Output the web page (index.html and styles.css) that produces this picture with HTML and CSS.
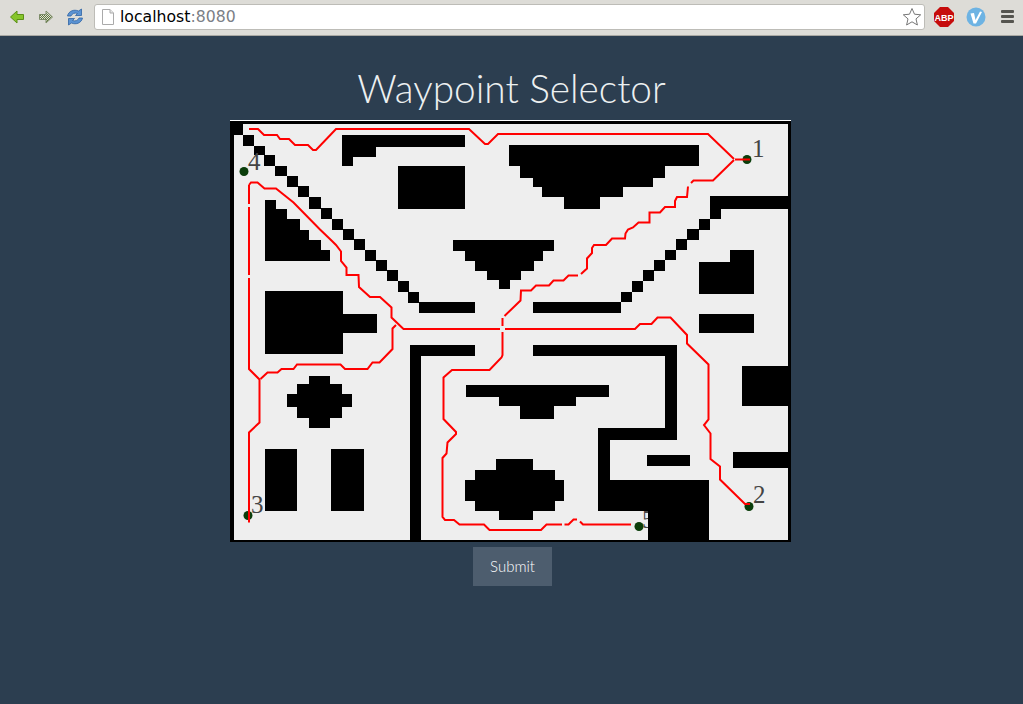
FILE: index.html
```html
<!DOCTYPE HTML>
<html>
	<head>
		<title>Waypoint Selector</title>
		<link rel="stylesheet" href="styles.css">
	</head>
	<body>
		<!-- browser toolbar -->
		<div class="toolbar">
			<svg class="navIcon" width="18" height="18" viewBox="0 0 18 18">
				<path d="M2.500 9 9 3V6.500H15.500V11.500H9V15z" fill="#86c52b" stroke="#5b8f17"/>
			</svg>
			<svg class="navIcon" width="18" height="18" viewBox="0 0 18 18">
				<defs>
					<pattern id="dither" width="2" height="2" patternUnits="userSpaceOnUse">
						<rect width="2" height="2" fill="#dddcd7"/>
						<rect width="1" height="1" fill="#5f7a3a"/>
						<rect x="1" y="1" width="1" height="1" fill="#5f7a3a"/>
					</pattern>
				</defs>
				<path d="M15.500 9 9 3V6.500H2.500V11.500H9V15z" fill="url(#dither)" stroke="#7d8c68"/>
			</svg>
			<svg class="navIcon" width="18" height="18" viewBox="0 0 18 18">
				<path d="M1.500 8C2.500 3 8 1 12.500 3L15.500 1V7.500H9.500L11.500 5.500C8.500 4.500 6 5.500 5 8z" fill="#5b93d3" stroke="#2f63a3" stroke-width=".8"/>
				<path d="M16.500 10C15.500 15 10 17 5.500 15L2.500 17V10.500H8.500L6.500 12.500C9.500 13.500 12 12.500 13 10z" fill="#5b93d3" stroke="#2f63a3" stroke-width=".8"/>
			</svg>
			<div class="urlBar">
				<svg width="12" height="16" viewBox="0 0 12 16">
					<path d="M.5.500H8L11.500 4V15.500H.5z" fill="#fff" stroke="#aaa"/>
					<path d="M8 .5V4h3.500" fill="#e8e8e8" stroke="#aaa"/>
				</svg>
				<span class="url">localhost<span class="port">:8080</span></span>
				<svg class="star" width="20" height="19" viewBox="0 0 20 19">
					<path d="M10 1.500 12.500 7.200 18.700 7.800 14 11.900 15.400 18 10 14.800 4.600 18 6 11.900 1.300 7.800 7.500 7.200z" fill="#fff" stroke="#777"/>
				</svg>
			</div>
			<svg class="extIcon" width="20" height="20" viewBox="0 0 20 20">
				<path d="M6 0H14L20 6V14L14 20H6L0 14V6z" fill="#c60c0c"/>
				<text x="10" y="13.500" class="abpText">ABP</text>
			</svg>
			<svg class="extIcon" width="20" height="20" viewBox="0 0 20 20">
				<circle cx="10" cy="10" r="9.500" fill="#6db3e3"/>
				<path d="M4.500 6.500 8 6 9.500 13 14 4.500 16 5 10 16.500H7.500z" fill="#fff"/>
			</svg>
			<div class="menuIcon"><span></span><span></span><span></span></div>
		</div>

		<div class="page">
			<h1>Waypoint Selector</h1>

			<div class="mapFrame">
				<svg class="map" width="554" height="416" viewBox="234 124 554 416">
					<!-- walls -->
					<path class="wall" d="
						M230 121H243V135H230Z M243 135H254V146H243Z M254 146H265V155H254Z M264 155H275V166H264Z
						M275 166H287V176H275Z M287 176H298V187H287Z M298 186H309V197H298Z M309 197H321V209H309Z
						M321 208H332V219H321Z M332 219H343V230H332Z M343 229H354V240H343Z M354 239H365V250H354Z
						M365 250H376V261H365Z M376 260H387V271H376Z M387 270H398V281H387Z M398 281H409V292H398Z
						M408 292H419V303H408Z M419 302H475V313H419Z
						M342 135H465V147H376V157H353V166H342Z
						M398 166H465V209H398Z
						M265 200H276V209H287V219H300V230H309V240H321V250H330V261H265Z
						M265 291H343V314H377V333H343V354H265Z
						M453 240H554V251H543V261H534V271H521V280H510V289H499V280H487V271H475V261H465V251H453Z
						M509 145H699V166H665V178H653V187H623V197H600V209H564V197H542V187H533V178H520V166H509Z
						M710 196H790V209H721V219H710Z M699 219H710V230H699Z M687 229H699V240H687Z M676 239H687V250H676Z
						M665 250H676V260H665Z M654 260H665V271H654Z M643 270H654V281H643Z M632 281H643V292H632Z
						M621 292H632V302H621Z M533 302H621V313H533Z
						M730 250H754V294H699V262H730Z
						M699 314H754V333H699Z
						M533 345H677V440H610V480H709V540H648V511H598V428H665V356H533Z
						M647 455H690V466H647Z
						M742 366H790V406H742Z
						M733 452H790V468H733Z
						M466 385H609V397H576V406H554V419H520V406H499V397H466Z
						M496 459H533V470H555V480H564V501H555V511H533V520H499V511H475V501H465V480H475V470H496Z
						M410 345H475V356H421V540H410Z
						M309 376H330V384H342V394H352V407H342V418H330V428H309V418H297V407H287V394H297V384H309Z
						M265 449H297V511H265Z
						M331 449H364V511H331Z"/>

					<!-- labels -->
					<text class="label" x="752" y="157">1</text>
					<text class="label" x="753" y="503">2</text>
					<text class="label" x="251" y="513">3</text>
					<text class="label" x="248" y="170">4</text>
					<text class="label" x="642" y="528">5</text>
					<rect class="wall" x="648" y="511" width="61" height="29"/>

					<!-- waypoints -->
					<circle class="point" cx="747" cy="159.500" r="4.500"/>
					<circle class="point" cx="749" cy="506.500" r="4.500"/>
					<circle class="point" cx="248" cy="515.500" r="4.500"/>
					<circle class="point" cx="244" cy="171.500" r="4.500"/>
					<circle class="point" cx="639" cy="526.500" r="4.500"/>

					<!-- route -->
					<path class="route" d="M249 129H258L264 135H277L280 139H289L295 145H308L313 150H316L336 129H469L485 144H488L498 134H708L734 159"/>
					<path class="route" d="M735 159.500H750"/>
					<path class="route" d="M734 160 713 180.500H693.500L691 183"/>
					<path class="route" d="M688 186.500 687 197H677L675 201V207H665L660 212.500H649.500V222.500H638.500L633 227.500 628 229.500 625.500 233.500 625 238.500H612L606 245H594L592 248V253L587 258.500V268.500L581 274"/>
					<path class="route" d="M578 275.500H568.500L563.500 280.500H553.500L549 285.500H536L531 290.500H521L520.500 300.500 504.500 316"/>
					<path class="route" d="M502.500 318V326"/>
					<path class="route" d="M502.500 332V355L501.500 357.500 489.500 370H452L443.500 377.500V419L456 432V434L447.500 442.500 446.500 453.500 442.500 458V517L445 520H454L459.500 524.500H484L489.500 530H541L546.500 524.500H562"/>
					<path class="route" d="M564.500 524.500H568.500L573.500 519.500H577"/>
					<path class="route" d="M580 521.500 583 524.500H631"/>
					<path class="route" d="M249 185 251 182.500H257.500L264.500 188.500H276L283.500 194.500 293.500 202.500 320 229.500 332 241 336 245 341 251.500V261L346.500 267.500V275H358.500L359 287 370 297H380L391.500 307.500V317.500L403.500 329H500"/>
					<path class="route" d="M505 329H635L640 324H651.500L657.500 317.500H670.500L687 335V343.500L708.500 364.500V419.500L704 425 710.500 433.500V459L720 466.500V479.500L745 504H750"/>
					<path class="route" d="M396 325 392.500 328.500V349L379.500 362.500H372.500L367.500 369H345L340.500 364.500H297L293.500 369H281.500L277.500 372.500H267.500L260.500 379"/>
					<path class="route" d="M249 185V204"/>
					<path class="route" d="M249 207V275"/>
					<path class="route" d="M249 278V369L259.500 379.500V422.500L249 432.500V522.500"/>
				</svg>
			</div>

			<button class="submitButton">Submit</button>
		</div>
	</body>
</html>
```

FILE: styles.css
```css
html, body
{
	margin:0;
	height:100%;
}

body
{
	background-color:#2c3e50;
	overflow:hidden;
}

.toolbar
{
	height:33px;
	padding-bottom:2px;
	display:flex;
	align-items:center;
	padding-left:8px;
	background-color:#dddcd7;
	border-bottom:1px solid #a9a8a3;
}

.navIcon
{
	margin-right:11px;
	flex:none;
}

.urlBar
{
	width:822px;
	height:24px;
	margin-left:-1px;
	margin-right:9px;
	display:flex;
	align-items:center;
	padding-left:7px;
	background-color:#fff;
	border:1px solid #bdbcb7;
	border-radius:3px;
}

.url
{
	margin-left:6px;
	font:15.700px "DejaVu Sans", sans-serif;
	color:#000;
}

.port
{
	color:#7b7f86;
}

.star
{
	margin-left:auto;
	margin-right:2px;
}

.extIcon
{
	margin-right:12px;
	flex:none;
}

.abpText
{
	font:bold 9px "Liberation Sans", sans-serif;
	fill:#fff;
	text-anchor:middle;
}

.menuIcon
{
	margin-left:3px;
	width:13px;
	display:flex;
	flex-direction:column;
	gap:2px;
}

.menuIcon span
{
	height:3px;
	background-color:#55554f;
	border-radius:1px;
}

.page
{
	display:flex;
	flex-direction:column;
	align-items:center;
}

h1
{
	margin:31px 0 11px 0;
	font:300 38.800px/43px Lato, sans-serif;
	color:#ecf0f1;
}

.mapFrame
{
	margin-right:2px;
	box-shadow:0 -1px 0 #fff;
	border:solid #000;
	border-width:3px 3px 2px 4px;
}

.map
{
	display:block;
	background-color:#eee;
}

.wall
{
	fill:#000;
	shape-rendering:crispEdges;
}

.route
{
	fill:none;
	stroke:#f00;
	stroke-width:2;
}

.point
{
	fill:#0a3d0a;
}

.label
{
	font:25px "Liberation Serif", serif;
	fill:#444;
}

.submitButton
{
	margin-top:5px;
	margin-left:2px;
	width:79px;
	height:39px;
	padding:0 0 2px 0;
	border:none;
	background-color:#4d5d6e;
	color:#fff;
	font:300 15px Lato, sans-serif;
}
```
